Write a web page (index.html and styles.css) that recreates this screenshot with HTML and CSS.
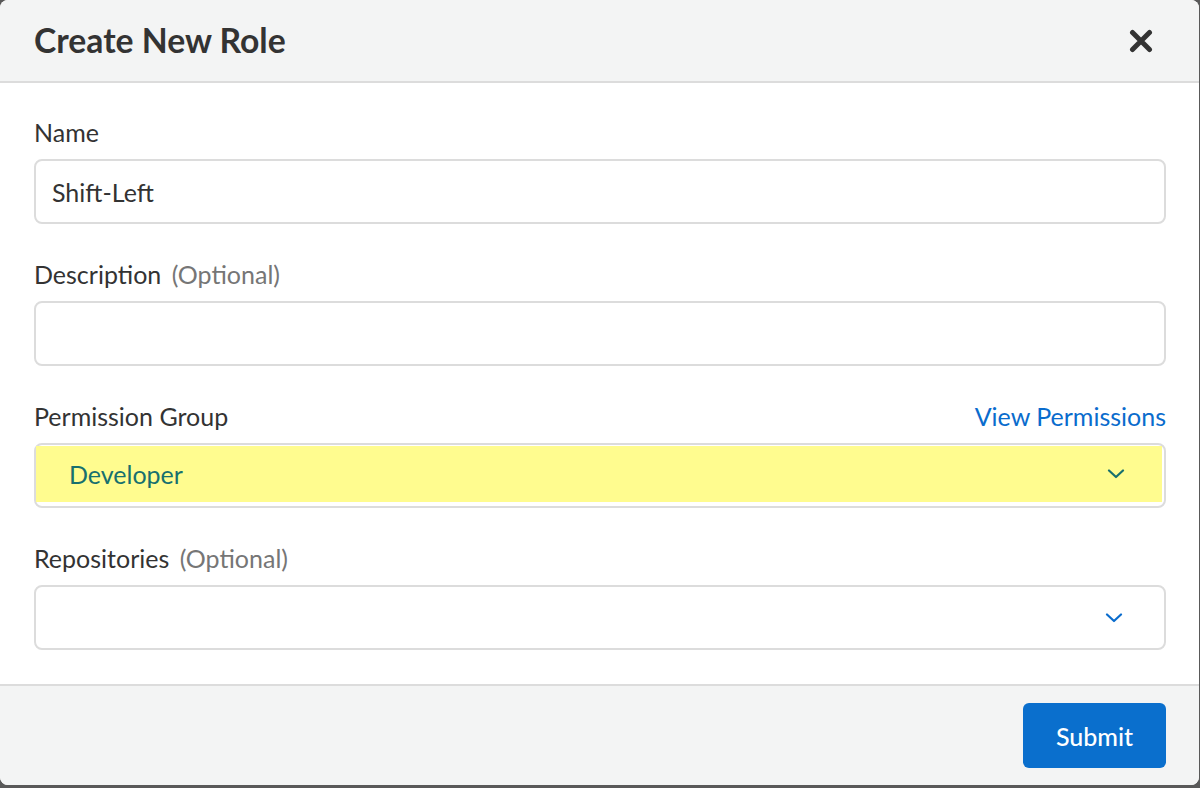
FILE: index.html
```html
<!DOCTYPE html>
<html>
<head>
<meta charset="utf-8">
<link rel="stylesheet" href="styles.css">
</head>
<body>
<div class="modal">
  <header class="modal-header">
    <h1 class="title">Create New Role</h1>
    <button class="close" aria-label="Close">
      <svg width="24" height="24" viewBox="0 0 24 24"><path d="M3.5 3.5 L20.5 20.5 M20.5 3.5 L3.5 20.5" stroke="#333" stroke-width="5" stroke-linecap="round" fill="none"/></svg>
    </button>
  </header>
  <div class="modal-body">
    <div class="field">
      <div class="label-row"><span class="label">Name</span></div>
      <div class="input"><span class="value">Shift-Left</span></div>
    </div>
    <div class="field">
      <div class="label-row"><span class="label">Description <span class="optional">(Optional)</span></span></div>
      <div class="input"></div>
    </div>
    <div class="field">
      <div class="label-row"><span class="label">Permission Group</span><a class="link">View Permissions</a></div>
      <div class="input select highlighted">
        <div class="fill">
          <span class="sel-value">Developer</span>
          <svg class="chev" width="18" height="10" viewBox="0 0 18 10"><path d="M2 1.5 L9 8 L16 1.5" stroke="#17706e" stroke-width="2.2" fill="none" stroke-linecap="round" stroke-linejoin="round"/></svg>
        </div>
      </div>
    </div>
    <div class="field">
      <div class="label-row"><span class="label">Repositories <span class="optional">(Optional)</span></span></div>
      <div class="input select">
        <span class="sel-value"></span>
        <svg class="chev" width="18" height="10" viewBox="0 0 18 10"><path d="M2 1.5 L9 8 L16 1.5" stroke="#0a6ccd" stroke-width="2.2" fill="none" stroke-linecap="round" stroke-linejoin="round"/></svg>
      </div>
    </div>
  </div>
  <footer class="modal-footer">
    <button class="submit">Submit</button>
  </footer>
</div>
</body>
</html>
```
FILE: styles.css
```css
html, body {
  margin: 0;
  padding: 0;
}
body {
  background: #595959;
  width: 1200px;
  height: 788px;
  overflow: hidden;
  font-family: Lato, "Open Sans", sans-serif;
  color: #333;
}
.modal {
  width: 1199px;
  height: 785px;
  background: #fff;
  border-radius: 8px;
  overflow: hidden;
  display: flex;
  flex-direction: column;
}
.modal-header {
  height: 81px;
  background: #f3f4f4;
  border-bottom: 2px solid #dcdcdc;
  display: flex;
  align-items: center;
  justify-content: space-between;
  padding: 0 46px 0 34px;
}
.title {
  margin: 0;
  font-size: 33.7px;
  font-weight: 700;
  color: #333;
  position: relative;
  top: -1px;
}
.close {
  border: 0;
  background: none;
  padding: 0;
  width: 24px;
  height: 24px;
  display: flex;
}
.modal-body {
  padding: 35px 33px 0 34px;
  flex: 1;
  display: flex;
  flex-direction: column;
  gap: 36px;
}
.field {
  display: flex;
  flex-direction: column;
  gap: 12px;
}
.label-row {
  display: flex;
  justify-content: space-between;
  align-items: baseline;
  height: 29px;
  line-height: 29px;
  font-size: 25px;
}
.label {
  color: #333;
}
.optional {
  color: #767676;
  margin-left: 4px;
}
.link {
  color: #0a6ccd;
}
.input {
  box-sizing: border-box;
  height: 65px;
  border: 2px solid #dcdcdc;
  border-radius: 8px;
  display: flex;
  align-items: center;
  padding: 0 16px;
  font-size: 25px;
}
.value {
  color: #333;
}
.select {
  justify-content: space-between;
  padding: 0 41px 0 33px;
}
.select.highlighted {
  padding: 1px 2px 4px 0;
  align-items: stretch;
}
.fill {
  flex: 1;
  background: #fffc8f;
  display: flex;
  align-items: center;
  justify-content: space-between;
  padding: 0 37px 0 33px;
}
.sel-value {
  color: #17706e;
}
.chev {
  display: block;
}
.modal-footer {
  height: 101px;
  box-sizing: border-box;
  background: #f3f4f4;
  border-top: 2px solid #dcdcdc;
  display: flex;
  justify-content: flex-end;
  align-items: center;
  padding: 0 33px 0 34px;
}
.submit {
  width: 143px;
  height: 65px;
  background: #0a6fcd;
  color: #fff;
  border: 0;
  border-radius: 6px;
  font-family: Lato, "Open Sans", sans-serif;
  font-size: 25px;
  font-weight: 500;
}
```
